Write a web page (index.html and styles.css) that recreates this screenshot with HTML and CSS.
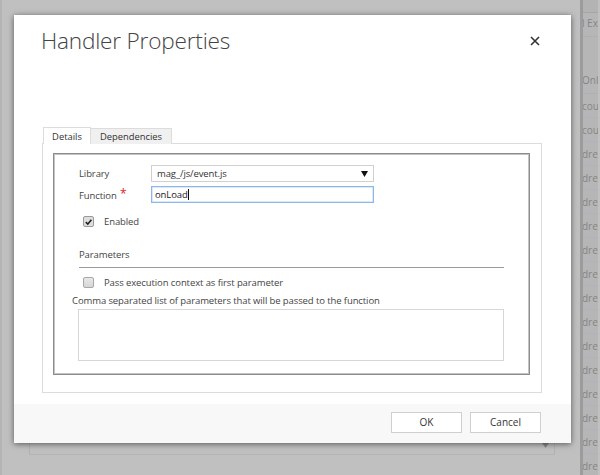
FILE: index.html
```html
<!DOCTYPE html>
<html>
<head>
<meta charset="utf-8">
<link rel="stylesheet" href="styles.css">
</head>
<body>
<div class="page">
  <div class="bgmain">
    <div class="bgbox"><svg class="bgarrow" width="7" height="5" viewBox="0 0 7 5"><path d="M0 0H7L3.5 5Z" fill="#8a8a8a"/></svg></div>
  </div>
  <div class="strip">
    <div class="strip-top"></div>
    <div class="strip-head"><span>l Ex</span></div>
    <div class="strip-gap"><span>Only</span></div>
    <div class="srow"><span>cour</span></div>
    <div class="srow"><span>cour</span></div>
    <div class="srow"><span>dres</span></div>
    <div class="srow"><span>dres</span></div>
    <div class="srow"><span>dres</span></div>
    <div class="srow"><span>dres</span></div>
    <div class="srow"><span>dres</span></div>
    <div class="srow"><span>dres</span></div>
    <div class="srow"><span>dres</span></div>
    <div class="srow"><span>dres</span></div>
    <div class="srow"><span>dres</span></div>
    <div class="srow"><span>dres</span></div>
    <div class="srow"><span>dres</span></div>
    <div class="srow"><span>dres</span></div>
    <div class="srow"><span>dres</span></div>
    <div class="srow"><span>dres</span></div>
  </div>
</div>

<div class="dialog">
  <div class="header">
    <h1 class="title">Handler Properties</h1>
    <svg class="close" width="10" height="10" viewBox="0 0 10 10"><path d="M1 1L9 9M9 1L1 9" stroke="#333" stroke-width="1.6"/></svg>
  </div>
  <div class="tabs">
    <div class="tab active">Details</div>
    <div class="tab">Dependencies</div>
  </div>
  <div class="panel">
    <div class="fieldset">
      <div class="row">
        <span class="label">Library</span>
        <div class="select"><span>mag_/js/event.js</span><svg width="7" height="6" viewBox="0 0 7 6"><path d="M0 0H7L3.5 6Z" fill="#111"/></svg></div>
      </div>
      <div class="row row2">
        <span class="label">Function <span class="req">*</span></span>
        <div class="input">onLoad<span class="caret"></span></div>
      </div>
      <div class="check-row enabled">
        <span class="cb checked"><svg width="10" height="10" viewBox="0 0 10 10"><path d="M2 5.2L4.2 7.4L8.2 2.4" stroke="#222" stroke-width="1.8" fill="none"/></svg></span>
        <span class="cb-label">Enabled</span>
      </div>
      <div class="section">Parameters</div>
      <div class="check-row pass">
        <span class="cb"></span>
        <span class="cb-label">Pass execution context as first parameter</span>
      </div>
      <div class="hint">Comma separated list of parameters that will be passed to the function</div>
      <div class="textarea"></div>
    </div>
  </div>
  <div class="footer">
    <div class="btn">OK</div>
    <div class="btn">Cancel</div>
  </div>
</div>
</body>
</html>
```

FILE: styles.css
```css
html, body {
  margin: 0;
  padding: 0;
}
body {
  width: 600px;
  height: 475px;
  overflow: hidden;
  background: #c0c0c0;
  font-family: "Open Sans", "Noto Sans", sans-serif;
  position: relative;
}
.page {
  display: flex;
  width: 600px;
  height: 475px;
}
.bgmain {
  width: 580px;
  border-left: 2px solid #b4b4b4;
  padding-top: 380px;
  box-sizing: border-box;
}
.bgbox {
  margin-left: 27px;
  width: 526px;
  height: 75px;
  border: 1px solid #b3b3b3;
  box-sizing: border-box;
  position: relative;
}
.bgarrow {
  position: absolute;
  right: 5px;
  bottom: 6px;
}
.strip {
  width: 15px;
  border-left: 3px solid #9c9c9c;
  background: #b6b6b6;
  overflow: hidden;
  color: #858585;
  font-size: 10px;
  white-space: nowrap;
}
.strip-top {
  height: 12px;
  border-bottom: 1px solid #a5a5a5;
  background: #b3b3b3;
}
.strip-head {
  height: 23px;
  line-height: 20px;
  border-bottom: 1px solid #aab0b8;
}
.strip-gap {
  height: 57px;
  line-height: 12px;
  display: flex;
  align-items: flex-end;
  padding-bottom: 7px;
  box-sizing: border-box;
  border-bottom: 1px solid #aab0b8;
}
.srow {
  height: 23px;
  line-height: 24px;
  border-bottom: 1px solid #aab4c2;
}
.strip span {
  display: block;
  margin-left: -1px;
}

.dialog {
  position: absolute;
  left: 14px;
  top: 15px;
  width: 557px;
  height: 428px;
  background: #fff;
  box-shadow: 0 1px 6px rgba(0, 0, 0, 0.55);
  display: flex;
  flex-direction: column;
}
.header {
  height: 112px;
  padding: 0 31px 0 27px;
  display: flex;
  justify-content: space-between;
  align-items: flex-start;
}
.title {
  margin: 10px 0 0 0;
  font-size: 22.6px;
  font-weight: 300;
  color: #444;
  line-height: 32px;
  letter-spacing: -0.2px;
}
.close {
  margin-top: 21px;
}
.tabs {
  display: flex;
  margin-left: 29px;
  height: 17px;
  position: relative;
  z-index: 1;
}
.tab {
  font-size: 9.4px;
  color: #333;
  border: 1px solid #dcdcdc;
  border-bottom: none;
  background: #f0f0f0;
  margin-top: 1px;
  height: 16px;
  line-height: 15px;
  box-sizing: border-box;
}
.tab.active {
  background: #fff;
  margin-top: 0;
  height: 17px;
  width: 48px;
  text-align: center;
  line-height: 17px;
}
.tab:not(.active) {
  width: 81px;
  text-align: center;
  border-left: none;
}
.panel {
  margin: -1px 29px 0 28px;
  height: 250px;
  border: 1px solid #dcdcdc;
  box-sizing: border-box;
  padding: 9px 11px 0 10px;
}
.fieldset {
  height: 222px;
  box-sizing: border-box;
  border: 1px solid #8c8c8c;
  box-shadow: inset 0 0 0 1px #c4c4c4;
  padding: 11px 0 0 25px;
  display: flex;
  flex-direction: column;
  font-size: 9.5px;
  letter-spacing: -0.1px;
  color: #444;
}
.row {
  display: flex;
  align-items: center;
  height: 17px;
}
.row2 {
  margin-top: 4px;
}
.label {
  width: 72px;
}
.req {
  color: #e02020;
  font-size: 12px;
  margin-left: 1px;
  position: relative;
  top: -1px;
}
.select {
  width: 223px;
  height: 17px;
  box-sizing: border-box;
  border: 1px solid #d0d0d0;
  display: flex;
  align-items: center;
  justify-content: space-between;
  padding: 0 5px 0 5px;
  color: #333;
}
.input {
  width: 223px;
  height: 17px;
  box-sizing: border-box;
  border: 1px solid #8fb6ea;
  box-shadow: inset 0 0 0 0.5px #b9d3f3;
  display: flex;
  align-items: center;
  padding: 0 3px;
  color: #222;
}
.caret {
  width: 1px;
  height: 11px;
  background: #111;
}
.check-row {
  display: flex;
  align-items: center;
  height: 13px;
}
.enabled {
  margin-top: 12px;
}
.cb {
  width: 11px;
  height: 11px;
  box-sizing: border-box;
  margin-left: 4px;
  border: 1px solid #a8a8a8;
  border-radius: 2px;
  background: linear-gradient(#e8e8e8, #d6d6d6);
  display: flex;
  align-items: center;
  justify-content: center;
}
.cb.checked {
  background: #dedede;
  border-color: #9a9a9a;
}
.cb-label {
  margin-left: 10px;
}
.section {
  margin-top: 18px;
  width: 425px;
  height: 22px;
  line-height: 14px;
  border-bottom: 1px solid #9a9a9a;
  box-sizing: border-box;
  padding-top: 2px;
}
.pass {
  margin-top: 8px;
}
.hint {
  margin-top: 5px;
  margin-left: -7px;
  line-height: 14px;
  height: 14px;
}
.textarea {
  margin-top: 1px;
  margin-left: -1px;
  width: 426px;
  height: 52px;
  box-sizing: border-box;
  border: 1px solid #d6d6d6;
}
.footer {
  margin-top: 11px;
  height: 39px;
  background: #f8f8f8;
  display: flex;
  justify-content: flex-end;
  gap: 8px;
  padding: 8px 30px 0 0;
  box-sizing: border-box;
}
.btn {
  width: 71px;
  height: 21px;
  box-sizing: border-box;
  border: 1px solid #cfcfcf;
  background: #fff;
  font-size: 10px;
  color: #333;
  text-align: center;
  line-height: 19px;
}
```
